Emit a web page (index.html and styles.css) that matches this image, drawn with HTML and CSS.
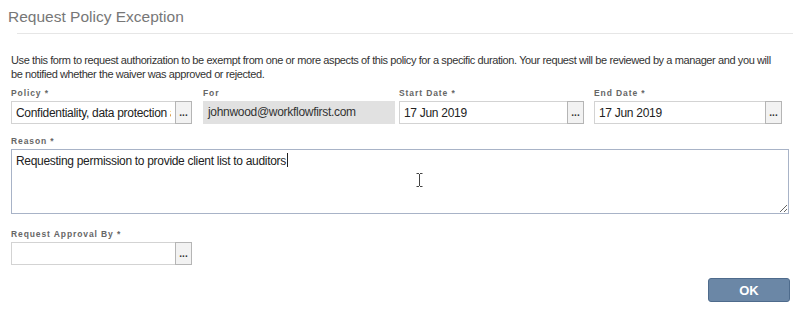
FILE: index.html
```html
<!DOCTYPE html>
<html lang="en">
<head>
    <meta charset="UTF-8">
    <title>Request Policy Exception</title>
    <link rel="stylesheet" href="styles.css">
</head>
<body>
    <div class="dialog">
        <div class="dialog-header">
            <h1>Request Policy Exception</h1>
        </div>
        <hr class="divider">

        <p class="intro">Use this form to request authorization to be exempt from one or more aspects of this policy for a specific duration. Your request will be reviewed by a manager and you will be notified whether the waiver was approved or rejected.</p>

        <div class="field-row">
            <div class="field field-policy">
                <label>Policy *</label>
                <div class="picker">
                    <input type="text" value="Confidentiality, data protection and privacy">
                    <button class="pick-btn">...</button>
                </div>
            </div>
            <div class="field field-for">
                <label>For</label>
                <div class="readonly">johnwood@workflowfirst.com</div>
            </div>
            <div class="field field-start">
                <label>Start Date *</label>
                <div class="picker">
                    <input type="text" value="17 Jun 2019">
                    <button class="pick-btn">...</button>
                </div>
            </div>
            <div class="field field-end">
                <label>End Date *</label>
                <div class="picker">
                    <input type="text" value="17 Jun 2019">
                    <button class="pick-btn">...</button>
                </div>
            </div>
        </div>

        <div class="field field-reason">
            <label>Reason *</label>
            <div class="reason-box">
                <textarea>Requesting permission to provide client list to auditors</textarea>
                <span class="caret"></span>
                <svg class="ibeam" width="7" height="14" viewBox="0 0 7 14">
                    <path d="M0.5 0.5h2.5M4 0.5h2.5M3.5 1v12M0.5 13.5h2.5M4 13.5h2.5" stroke="#444" stroke-width="1" fill="none"/>
                </svg>
            </div>
        </div>

        <div class="field field-approval">
            <label>Request Approval By *</label>
            <div class="picker">
                <input type="text" value="">
                <button class="pick-btn">...</button>
            </div>
        </div>

        <div class="actions">
            <button class="ok-btn">OK</button>
        </div>
    </div>
</body>
</html>
```

FILE: styles.css
```css
* {
    margin: 0;
    padding: 0;
    box-sizing: border-box;
    font-family: 'Liberation Sans', Arial, sans-serif;
}

body {
    background-color: white;
    color: #333;
}

.dialog {
    width: 800px;
    height: 309px;
    padding: 0 10px 0 11px;
}

.dialog-header {
    padding-top: 6px;
    margin-left: -3px;
}

.dialog-header h1 {
    font-size: 15.5px;
    line-height: 22px;
    font-weight: normal;
    color: #777;
}

.divider {
    border: none;
    border-top: 1px solid #e6e6e6;
    margin: 5px -3px 0 6px;
}

.intro {
    max-width: 770px;
    font-size: 11px;
    letter-spacing: -0.4px;
    line-height: 14px;
    color: #333;
    margin-top: 19px;
}

.field-row {
    display: grid;
    grid-template-columns: 192px 196px 195px 189px;
    margin-top: 6px;
}

.field label {
    display: block;
    font-size: 8.5px;
    line-height: 12px;
    font-weight: bold;
    letter-spacing: 0.9px;
    color: #666;
    margin-bottom: 2px;
}

.field-policy { width: 181px; }
.field-for { width: 192px; }
.field-start { width: 185px; }
.field-end { width: 188px; }

.picker {
    display: flex;
    height: 23px;
}

.picker input {
    flex: 1;
    min-width: 0;
    height: 23px;
    border: 1px solid #d3d3d3;
    border-right: none;
    padding: 0 4px;
    font-size: 12px;
    letter-spacing: -0.3px;
    color: #222;
    background: white;
    outline: none;
}

.pick-btn {
    width: 17px;
    height: 23px;
    border: 1px solid #b5b5b5;
    background: #f2f2f2;
    font-size: 10px;
    font-weight: bold;
    color: #333;
    line-height: 20px;
    cursor: pointer;
}

.readonly {
    height: 23px;
    background: #e1e1e1;
    border: 1px solid #e1e1e1;
    padding: 0 4px;
    font-size: 12px;
    letter-spacing: -0.3px;
    line-height: 21px;
    color: #333;
}

.field-reason {
    margin-top: 11px;
}

.reason-box {
    position: relative;
    width: 778px;
    height: 65px;
}

.reason-box textarea {
    display: block;
    width: 100%;
    height: 100%;
    border: 1px solid #a8b3c7;
    padding: 3px 4px;
    font-size: 12px;
    letter-spacing: -0.3px;
    line-height: 16px;
    color: #222;
    resize: vertical;
    outline: none;
}

.caret {
    position: absolute;
    left: 276px;
    top: 4px;
    width: 1px;
    height: 14px;
    background: #222;
}

.ibeam {
    position: absolute;
    left: 405px;
    top: 24px;
}

.field-approval {
    margin-top: 14px;
    width: 181px;
}

.actions {
    display: flex;
    justify-content: flex-end;
    margin-top: 13px;
}

.ok-btn {
    width: 82px;
    height: 24px;
    background: #6b87a6;
    border: 1px solid #4e6b8c;
    border-radius: 3px;
    color: white;
    font-size: 13px;
    font-weight: bold;
    cursor: pointer;
}
```
